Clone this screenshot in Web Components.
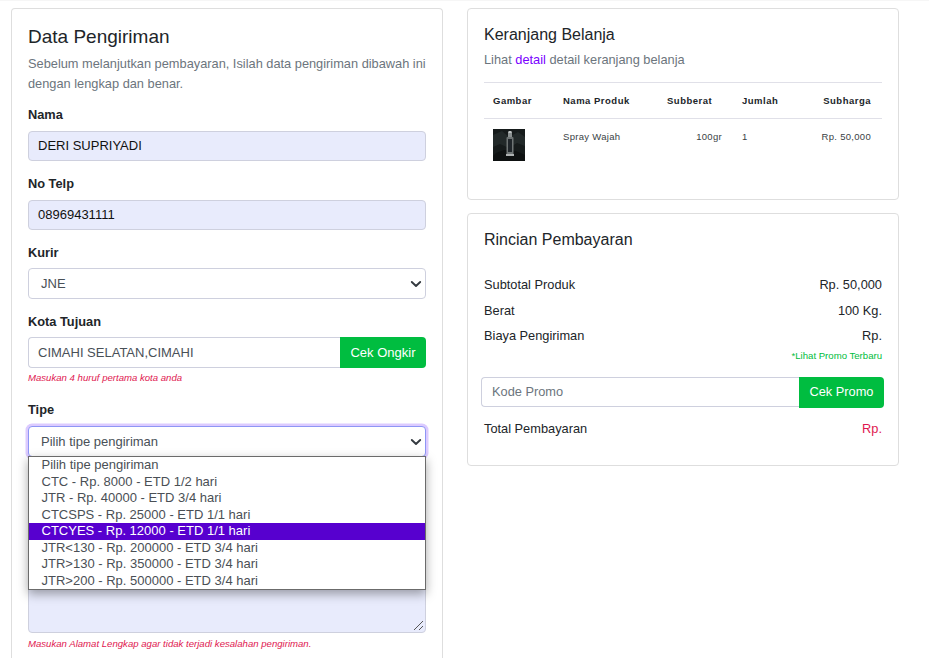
<!DOCTYPE html>
<html><head><meta charset="utf-8"><style>
html,body{margin:0;padding:0;background:#fff;height:658px;overflow:hidden}
body{font:13px/20px "Liberation Sans",Arial,sans-serif;color:#212529}
</style></head><body>
<checkout-page>
  <shipping-form slot="left"></shipping-form>
  <cart-card slot="right"></cart-card>
  <payment-card slot="right"></payment-card>
</checkout-page>
<script>
const base=`*{box-sizing:border-box}`;
const fieldCss=`
.label{font-weight:700;font-size:12.8px;line-height:20px;color:#212529;height:20px}
.ctl{height:31px;border:1px solid #ced0de;border-radius:4px;padding:0 9px;display:flex;align-items:center;font-size:13px;color:#495057;background:#fff}
.fill{background:#e8ebfc;color:#111}
`;
function def(name,css,html,hostCss){
  customElements.define(name,class extends HTMLElement{
    constructor(){super();this.attachShadow({mode:'open'}).innerHTML=`<style>${base}:host{display:block;box-sizing:border-box;${hostCss||''}}${css}</style>${html}`;}
  });
}
const chev=`<svg width="16" height="16" viewBox="0 0 16 16" style="position:absolute;right:1px;top:7px"><path d="M3.8 6L8 10l4.2-4" fill="none" stroke="#343a40" stroke-width="1.9" stroke-linecap="round" stroke-linejoin="round"/></svg>`;

def('checkout-page',`
:host{height:658px;overflow:hidden}
.wrap{display:grid;grid-template-columns:432px 432px;column-gap:24px;padding:7px 0 0 11px;border-top:1px solid #f6f6f6;height:658px;align-items:start}
.col{display:flex;flex-direction:column;gap:13px;min-width:0}
`,`<div class="wrap"><div class="col"><slot name="left"></slot></div><div class="col"><slot name="right"></slot></div></div>`);

def('field-select',fieldCss+`
:host{position:relative}
.ctl{position:relative;padding-left:12px}
:host([focus]) .ctl{border-color:#8e96f5;box-shadow:0 0 0 2.5px #dccbff}
`,`<div class="ctl"><slot></slot>${chev}</div>`);

def('type-menu',`
:host{position:absolute;left:0;right:0;top:-1px;z-index:5}
.box{position:absolute;left:0;right:0;top:0;background:#fff;border:1px solid #6b6b6b;box-shadow:0 4px 10px rgba(0,0,0,.35);color:#4a4f55;font-size:13px}
.o{height:16.5px;line-height:16.5px;padding-left:12.5px;white-space:nowrap}
.on{background:#5700cf;color:#fff}
`,`<div class="box">
<div class="o">Pilih tipe pengiriman</div>
<div class="o">CTC - Rp. 8000 - ETD 1/2 hari</div>
<div class="o">JTR - Rp. 40000 - ETD 3/4 hari</div>
<div class="o">CTCSPS - Rp. 25000 - ETD 1/1 hari</div>
<div class="o on">CTCYES - Rp. 12000 - ETD 1/1 hari</div>
<div class="o">JTR&lt;130 - Rp. 200000 - ETD 3/4 hari</div>
<div class="o">JTR&gt;130 - Rp. 350000 - ETD 3/4 hari</div>
<div class="o">JTR&gt;200 - Rp. 500000 - ETD 3/4 hari</div>
</div>`);

def('shipping-form',fieldCss+`
:host{border:1px solid #dedede;border-bottom:0;border-radius:4px 4px 0 0;padding:16px 16px 0;height:650px}
h1{font-weight:400;font-size:19px;line-height:24px;margin:0 0 5px;color:#212529}
p{margin:0 0 11px;color:#6c757d;line-height:20px;font-size:12.8px}
.gap{height:13px}
.ctl.t{height:30px}
.grp{display:flex}
.grp .ctl{flex:1;border-radius:4px 0 0 4px;border-right:0}
.btn{width:86px;height:31px;background:#00bd40;color:#fff;border-radius:0 4px 4px 0;display:flex;align-items:center;justify-content:center;font-size:13px}
.hint{font-style:italic;font-size:9.6px;line-height:14px;color:#e0174f;margin-top:3px}
.anchor{position:relative;height:0}
.area{height:71px;background:#e8ebfc;border:1px solid #ced0de;border-radius:4px;position:relative}
.grip{position:absolute;right:1px;bottom:1px}
`,`
<h1>Data Pengiriman</h1>
<p>Sebelum melanjutkan pembayaran, Isilah data pengiriman dibawah ini dengan lengkap dan benar.</p>
<div class="label" style="margin-bottom:6px">Nama</div>
<div class="ctl t fill">DERI SUPRIYADI</div>
<div class="gap"></div>
<div class="label" style="margin-bottom:6px">No Telp</div>
<div class="ctl t fill">08969431111</div>
<div class="gap"></div>
<div class="label" style="margin-bottom:5px">Kurir</div>
<field-select>JNE</field-select>
<div class="gap"></div>
<div class="label" style="margin-bottom:5px">Kota Tujuan</div>
<div class="grp"><div class="ctl">CIMAHI SELATAN,CIMAHI</div><div class="btn">Cek Ongkir</div></div>
<div class="hint">Masukan 4 huruf pertama kota anda</div>
<div class="gap" style="height:15px"></div>
<div class="label" style="margin-bottom:6px">Tipe</div>
<field-select focus>Pilih tipe pengiriman</field-select>
<div class="anchor"><type-menu></type-menu></div>
<div style="height:105px"></div>
<div class="area"><svg class="grip" width="12" height="12" viewBox="0 0 12 12"><path d="M2 11L11 2M7 11l4-4" stroke="#555" stroke-width="1" fill="none"/></svg></div>
<div class="hint" style="margin-top:4px">Masukan Alamat Lengkap agar tidak terjadi kesalahan pengiriman.</div>
`);

def('cart-card',`
:host{border:1px solid #dedede;border-radius:4px;padding:16px 16px 0;height:192px}
h2{font-weight:400;font-size:16px;line-height:20px;margin:0 0 5px;color:#212529}
p{margin:0 0 12px;color:#6c757d;line-height:20px;font-size:12.8px}
a{color:#7a00ff;text-decoration:none}
table{width:398px;border-collapse:collapse;table-layout:fixed;font-size:9.5px;border-top:1px solid #e0e0e8}
th{font-weight:700;text-align:left;letter-spacing:.5px;padding:0 9px;height:36px;border-bottom:1px solid #e0e0e8;color:#212529}
td{padding:0 9px;height:52px;vertical-align:top;padding-top:8px;color:#3a3f45;letter-spacing:.3px}
td:first-child{padding-top:9px}
.r{text-align:right}
.pic{display:block;margin-top:1px}
`,`
<h2>Keranjang Belanja</h2>
<p>Lihat <a>detail</a> detail keranjang belanja</p>
<table><colgroup><col style="width:70px"><col style="width:104px"><col style="width:75px"><col style="width:60px"><col></colgroup>
<tr><th>Gambar</th><th>Nama Produk</th><th>Subberat</th><th>Jumlah</th><th class="r" style="padding-right:11px">Subharga</th></tr>
<tr><td><svg class="pic" width="32" height="32" viewBox="0 0 32 32"><rect width="32" height="32" fill="#161b1b"/><path d="M0 6l9-4 7 6 9-5 7 5v9l-8-3-8 5-9-4-7 3z" fill="#222929"/><path d="M3 24l8-3 12 1 9 4v6H0v-5z" fill="#0e1111"/><rect x="15" y="3" width="4" height="5" fill="#8a9090"/><rect x="15.5" y="2" width="3" height="2" fill="#bfc4c4"/><rect x="13.5" y="8" width="7" height="18" rx="1" fill="#6f7575"/><rect x="15" y="10" width="4" height="13" fill="#20262a"/><rect x="13" y="25" width="8" height="2" fill="#aeb2b2"/></svg></td><td>Spray Wajah</td><td class="r" style="padding-right:11px">100gr</td><td>1</td><td class="r" style="padding-right:11px">Rp. 50,000</td></tr>
</table>`);

def('payment-card',`
:host{border:1px solid #dedede;border-radius:4px;padding:16px;height:253px}
h2{font-weight:400;font-size:16px;line-height:20px;margin:0 0 25px;color:#212529}
.row{display:flex;justify-content:space-between;font-size:12.8px;line-height:20px;height:25.5px;color:#212529}
.note{font-size:9.6px;line-height:12px;color:#00bd40;text-align:right;height:12px;margin:-2px 0 15px}
.grp{display:flex;margin:0 -2px 11px -3px}
.inp{flex:1;height:30px;border:1px solid #ced0de;border-right:0;border-radius:4px 0 0 4px;padding-left:10px;display:flex;align-items:center;color:#6c757d;font-size:12.8px}
.btn{width:85px;height:31px;background:#00bd40;color:#fff;border-radius:0 4px 4px 0;display:flex;align-items:center;justify-content:center;font-size:12.8px}
.red{color:#e0174f}
`,`
<h2>Rincian Pembayaran</h2>
<div class="row"><span>Subtotal Produk</span><span>Rp. 50,000</span></div>
<div class="row"><span>Berat</span><span>100 Kg.</span></div>
<div class="row"><span>Biaya Pengiriman</span><span>Rp.</span></div>
<div class="note">*Lihat Promo Terbaru</div>
<div class="grp"><div class="inp">Kode Promo</div><div class="btn">Cek Promo</div></div>
<div class="row"><span>Total Pembayaran</span><span class="red">Rp.</span></div>
`);
</script>
</body></html>
